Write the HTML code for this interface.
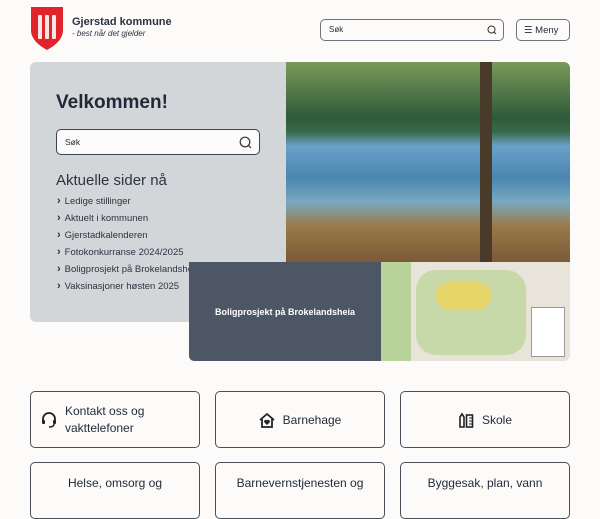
<!DOCTYPE html>
<html><head><meta charset="utf-8"><style>
*{box-sizing:border-box;margin:0;padding:0}
body{width:600px;height:480px;overflow:hidden;background:#fcfbfa;font-family:"Liberation Sans",sans-serif;color:#1f2937;position:relative}
.a{position:absolute}
.box{border:1px solid #3b4250;border-radius:6px;background:#fcfbfa}
.card{position:absolute;border:1px solid #4a4f58;border-radius:5px;width:170px;height:57px;display:flex;align-items:center;justify-content:center;font-size:12px;color:#1f2937;gap:8px}
.li{font-size:9.5px;color:#2b3340;position:absolute;left:57px}
.li:before{content:"›";font-weight:bold;margin-right:4px;font-size:11px}
.s{position:absolute}
</style></head><body>
<svg class="a" style="left:30px;top:6px" width="34" height="44" viewBox="0 0 34 44"><path d="M1 1H33V24C33 34 24 40 17 44C10 40 1 34 1 24Z" fill="#e0242b"/><g fill="#f5e6e6"><rect x="8" y="9" width="4" height="24" rx="1"/><rect x="15" y="9" width="4" height="24" rx="1"/><rect x="22" y="9" width="4" height="24" rx="1"/></g></svg>
<div class="a" style="left:72px;top:16px;font-size:11px;font-weight:bold;color:#2b3340">Gjerstad kommune</div>
<div class="a" style="left:72px;top:29px;font-size:8px;font-style:italic;color:#2b3340">- best når det gjelder</div>
<div class="a box" style="left:320px;top:19px;width:184px;height:22px;border-radius:5px;font-size:8px;padding:5px 8px;border-color:#6b7280">Søk<svg class="s" style="right:6px;top:5px" width="10" height="10" viewBox="0 0 10 10"><circle cx="4.5" cy="4.5" r="3.5" fill="none" stroke="#333" stroke-width="1"/><path d="M7 7L9 9" stroke="#333"/></svg></div>
<div class="a box" style="left:516px;top:19px;width:54px;height:22px;border-radius:5px;font-size:9.5px;padding:5px 7px;border-color:#6b7280">☰ Meny</div>
<div class="a" style="left:30px;top:62px;width:262px;height:260px;background:#d3d6d9;border-radius:6px 0 0 6px"></div>
<div class="a" style="left:56px;top:92px;font-size:19px;font-weight:bold;color:#1f2937">Velkommen!</div>
<div class="a box" style="left:56px;top:129px;width:204px;height:26px;padding:7px 8px;font-size:8.5px;border-radius:5px">Søk<svg class="s" style="right:7px;top:6px" width="13" height="13" viewBox="0 0 13 13"><circle cx="6" cy="6" r="4.8" fill="none" stroke="#333" stroke-width="1.2"/><path d="M9.5 9.5L12 12" stroke="#333" stroke-width="1.2"/></svg></div>
<div class="a" style="left:56px;top:172px;font-size:15px;color:#2b3340">Aktuelle sider nå</div>
<div class="li" style="top:195px">Ledige stillinger</div>
<div class="li" style="top:212px">Aktuelt i kommunen</div>
<div class="li" style="top:229px">Gjerstadkalenderen</div>
<div class="li" style="top:246px">Fotokonkurranse 2024/2025</div>
<div class="li" style="top:263px">Boligprosjekt på Brokelandsheia</div>
<div class="li" style="top:280px">Vaksinasjoner høsten 2025</div>
<div class="a" style="left:286px;top:62px;width:284px;height:200px;border-radius:0 6px 0 0;background:linear-gradient(180deg,#7a9a5a 0%,#2f5a3a 28%,#3a6a4a 35%,#6aa0c8 42%,#4a86b0 58%,#7aa8c0 70%,#9a7a48 82%,#7a5a38 100%)"></div>
<div class="a" style="left:480px;top:62px;width:12px;height:200px;background:#4a3a2a"></div>
<div class="a" style="left:189px;top:262px;width:192px;height:99px;background:#4d5665;border-radius:0 0 0 5px;color:#fff;font-size:9px;font-weight:bold;display:flex;align-items:center;justify-content:center">Boligprosjekt på Brokelandsheia</div>
<div class="a" style="left:381px;top:262px;width:189px;height:99px;background:#e8e4da;border-radius:0 0 6px 0;overflow:hidden"><div class="a" style="left:0;top:0;width:30px;height:99px;background:#b9d49a"></div><div class="a" style="left:35px;top:8px;width:110px;height:85px;background:#c7d9a8;border-radius:20px"></div><div class="a" style="left:55px;top:20px;width:55px;height:28px;background:#e6d66a;border-radius:15px"></div><div class="a" style="left:150px;top:45px;width:34px;height:50px;background:#fff;border:1px solid #999"></div></div>
<div class="card" style="left:30px;top:391px;justify-content:flex-start;padding-left:10px"><svg width="16" height="16" viewBox="0 0 16 16"><path d="M2 9V7a6 6 0 0 1 12 0v2" fill="none" stroke="#222" stroke-width="1.8"/><rect x="1" y="8" width="3" height="4" rx="1" fill="#222"/><rect x="12" y="8" width="3" height="4" rx="1" fill="#222"/><path d="M13 12q0 3-5 3" fill="none" stroke="#222" stroke-width="1.5"/></svg><span style="line-height:17px">Kontakt oss og<br>vakttelefoner</span></div>
<div class="card" style="left:215px;top:391px"><svg width="16" height="16" viewBox="0 0 16 16"><path d="M1 8L8 2L15 8M3 7V15H13V7" fill="none" stroke="#222" stroke-width="1.8"/><path d="M8 13L5.5 10.5a1.5 1.5 0 0 1 2.5-2a1.5 1.5 0 0 1 2.5 2Z" fill="#222"/></svg>Barnehage</div>
<div class="card" style="left:400px;top:391px"><svg width="16" height="16" viewBox="0 0 16 16"><path d="M2 5L4 2L6 5V15H2Z" fill="none" stroke="#222" stroke-width="1.6"/><rect x="8.5" y="3" width="6" height="12" fill="none" stroke="#222" stroke-width="1.6"/><path d="M11 6h3M11 9h3M11 12h3" stroke="#222"/></svg>Skole</div>
<div class="card" style="left:30px;top:462px;align-items:flex-start;padding-top:13px">Helse, omsorg og</div>
<div class="card" style="left:215px;top:462px;align-items:flex-start;padding-top:13px">Barnevernstjenesten og</div>
<div class="card" style="left:400px;top:462px;align-items:flex-start;padding-top:13px">Byggesak, plan, vann</div>
</body></html>
